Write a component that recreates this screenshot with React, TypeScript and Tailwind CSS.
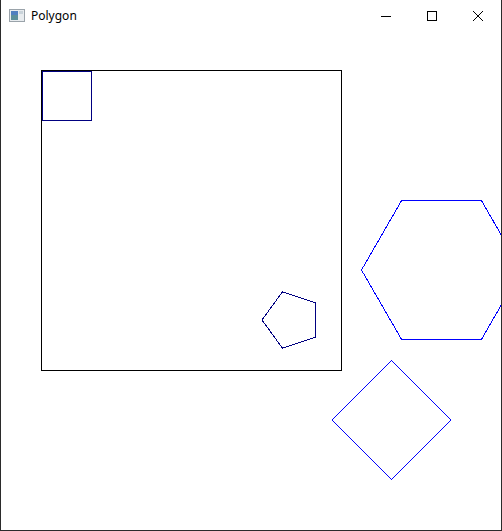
import React from "react";

type Pt = [number, number];

// regular polygon points around a center
function regular(cx: number, cy: number, r: number, n: number, start: number): string {
  const pts: Pt[] = [];
  for (let i = 0; i < n; i++) {
    const a = start + (i * 2 * Math.PI) / n;
    pts.push([cx + r * Math.cos(a), cy + r * Math.sin(a)]);
  }
  return pts.map((p) => `${p[0].toFixed(1)},${p[1].toFixed(1)}`).join(" ");
}

function AppIcon() {
  return (
    <svg width="16" height="14" viewBox="0 0 16 14" className="shrink-0">
      <rect x="0.5" y="0.5" width="15" height="12" fill="#e8ecef" stroke="#9aa3aa" />
      <rect x="2" y="2" width="7" height="9" fill="#5b8f9a" />
      <rect x="2" y="2" width="7" height="4" fill="#4f7fc0" />
      <rect x="10" y="2" width="4" height="3" fill="#c9d3da" />
    </svg>
  );
}

function TitleBar() {
  return (
    <div className="flex items-center h-[31px] bg-white shrink-0">
      <div className="flex items-center gap-[6px] pl-[8px] pt-[1px]">
        <AppIcon />
        <span className="text-[12px] text-black font-['Noto_Sans','Liberation_Sans',sans-serif] leading-none">
          Polygon
        </span>
      </div>
      <div className="ml-auto flex items-center h-full">
        <div className="w-[46px] h-full flex items-center justify-center">
          <svg width="10" height="10" viewBox="0 0 10 10">
            <line x1="0" y1="5.5" x2="10" y2="5.5" stroke="#000" strokeWidth="1" shapeRendering="crispEdges" />
          </svg>
        </div>
        <div className="w-[46px] h-full flex items-center justify-center">
          <svg width="10" height="10" viewBox="0 0 10 10">
            <rect x="0.5" y="0.5" width="9" height="9" fill="none" stroke="#000" strokeWidth="1" shapeRendering="crispEdges" />
          </svg>
        </div>
        <div className="w-[46px] h-full flex items-center justify-center">
          <svg width="10" height="10" viewBox="0 0 10 10">
            <path d="M0 0 L10 10 M10 0 L0 10" stroke="#000" strokeWidth="1" />
          </svg>
        </div>
      </div>
    </div>
  );
}

export default function App() {
  const pentagon = regular(291.5, 320, 29.5, 5, Math.PI);
  const hexagon = regular(441.5, 270, 80, 6, Math.PI);
  const diamond = regular(391.5, 420, 59.5, 4, Math.PI);

  return (
    <div className="w-[502px] h-[531px] bg-white border-x border-b border-[#2b2b2b] flex flex-col overflow-hidden">
      <TitleBar />
      <div className="flex-1 relative">
        <svg
          width="500"
          height="499"
          viewBox="1 31 500 499"
          className="block"
          shapeRendering="crispEdges"
        >
          <rect x="41.5" y="70.5" width="300" height="300" fill="none" stroke="#000" strokeWidth="1" />
          <rect x="42.5" y="71.5" width="49" height="49" fill="none" stroke="#000080" strokeWidth="1" />
          <polygon points={pentagon} fill="none" stroke="#000080" strokeWidth="1" />
          <polygon points={hexagon} fill="none" stroke="#0000ff" strokeWidth="1" />
          <polygon points={diamond} fill="none" stroke="#0000ff" strokeWidth="1" />
        </svg>
      </div>
    </div>
  );
}
